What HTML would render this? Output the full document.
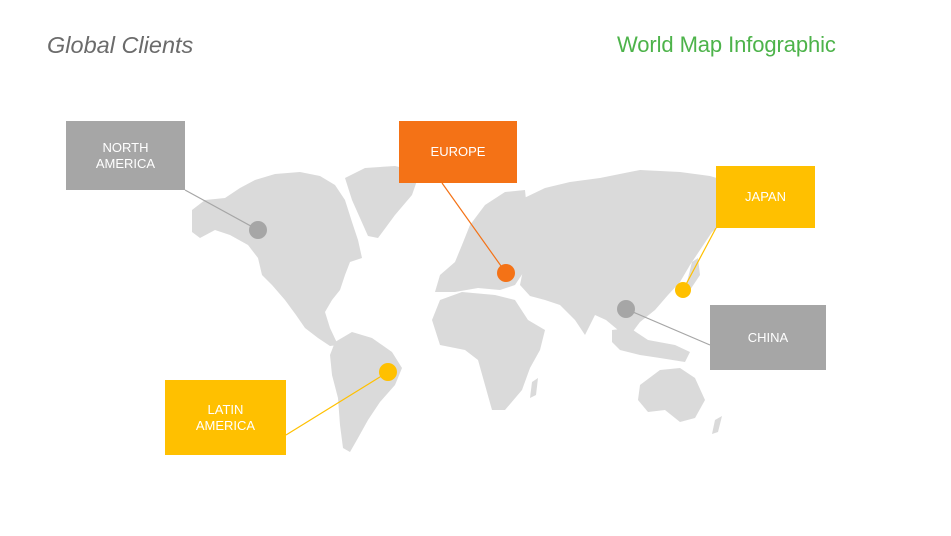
<!DOCTYPE html>
<html><head><meta charset="utf-8"><style>
html,body{margin:0;padding:0;background:#fff;}
body{width:951px;height:536px;position:relative;overflow:hidden;font-family:"Liberation Sans",sans-serif;}
.t1{position:absolute;left:47px;top:32px;font-size:23.5px;font-style:italic;color:#6b6b6b;}
.t2{position:absolute;left:617px;top:32px;font-size:22px;color:#4db34a;letter-spacing:-0.1px;}
.box{position:absolute;color:#fff;font-size:13px;display:flex;align-items:center;justify-content:center;text-align:center;line-height:16px;}
svg{position:absolute;left:0;top:0;}
</style></head><body>
<svg width="951" height="536" viewBox="0 0 951 536">
<g fill="#dadada">
<path d="M192,210 L205,200 L225,198 L240,188 L255,180 L275,174 L300,172 L320,176 L335,185 L345,200 L352,222 L358,240 L362,258 L350,262 L345,275 L340,290 L332,300 L325,312 L330,328 L338,345 L330,346 L318,338 L305,328 L296,315 L285,300 L272,285 L262,275 L258,258 L248,245 L230,235 L215,230 L200,238 L192,232 Z"/>
<path d="M345,178 L365,168 L395,166 L420,172 L412,195 L395,215 L378,238 L368,236 L360,218 L352,200 Z"/>
<path d="M335,342 L352,332 L372,338 L392,352 L402,368 L395,385 L380,402 L368,420 L358,438 L350,452 L343,448 L340,425 L338,398 L332,375 L330,355 Z"/>
<path d="M435,292 L440,275 L455,262 L462,245 L470,225 L485,205 L505,192 L525,190 L530,240 L525,270 L515,285 L500,290 L478,288 L455,292 Z"/>
<path d="M432,320 L440,300 L462,292 L495,295 L515,300 L528,320 L545,330 L540,350 L530,368 L522,390 L505,410 L492,410 L485,385 L478,360 L465,350 L440,345 Z"/>
<path d="M532,382 L538,378 L536,395 L530,398 Z"/>
<path d="M520,200 L545,188 L570,182 L600,178 L640,170 L680,172 L710,176 L740,185 L750,200 L730,218 L712,232 L700,250 L690,265 L680,282 L668,295 L655,310 L640,322 L628,338 L618,330 L606,320 L595,315 L585,335 L575,320 L560,305 L545,300 L530,296 L520,285 L525,260 L528,235 Z"/>
<path d="M692,262 L698,258 L700,275 L690,290 L684,292 L688,278 Z"/>
<path d="M612,330 L630,328 L648,340 L675,345 L690,352 L685,362 L660,358 L640,355 L620,350 L612,342 Z"/>
<path d="M640,385 L660,370 L680,368 L695,378 L705,400 L695,418 L680,422 L665,410 L648,412 L638,400 Z"/>
<path d="M715,420 L722,416 L718,432 L712,434 Z"/>
</g>
<g stroke-width="1.2">
<line x1="185" y1="190" x2="258" y2="230" stroke="#a6a6a6"/>
<line x1="442" y1="183" x2="506" y2="273" stroke="#f47216"/>
<line x1="716" y1="228" x2="683" y2="290" stroke="#ffc000"/>
<line x1="710" y1="345" x2="626" y2="309" stroke="#a6a6a6"/>
<line x1="286" y1="435" x2="388" y2="372" stroke="#ffc000"/>
</g>
<circle cx="258" cy="230" r="9" fill="#a6a6a6"/>
<circle cx="506" cy="273" r="9" fill="#f47216"/>
<circle cx="683" cy="290" r="8" fill="#ffc000"/>
<circle cx="626" cy="309" r="9" fill="#a6a6a6"/>
<circle cx="388" cy="372" r="9" fill="#ffc000"/>
</svg>
<div class="t1">Global Clients</div>
<div class="t2">World Map Infographic</div>
<div class="box" style="left:66px;top:121px;width:119px;height:69px;background:#a6a6a6;">NORTH<br>AMERICA</div>
<div class="box" style="left:399px;top:121px;width:118px;height:62px;background:#f47216;">EUROPE</div>
<div class="box" style="left:716px;top:166px;width:99px;height:62px;background:#ffc000;">JAPAN</div>
<div class="box" style="left:710px;top:305px;width:116px;height:65px;background:#a6a6a6;">CHINA</div>
<div class="box" style="left:165px;top:380px;width:121px;height:75px;background:#ffc000;">LATIN<br>AMERICA</div>
</body></html>
